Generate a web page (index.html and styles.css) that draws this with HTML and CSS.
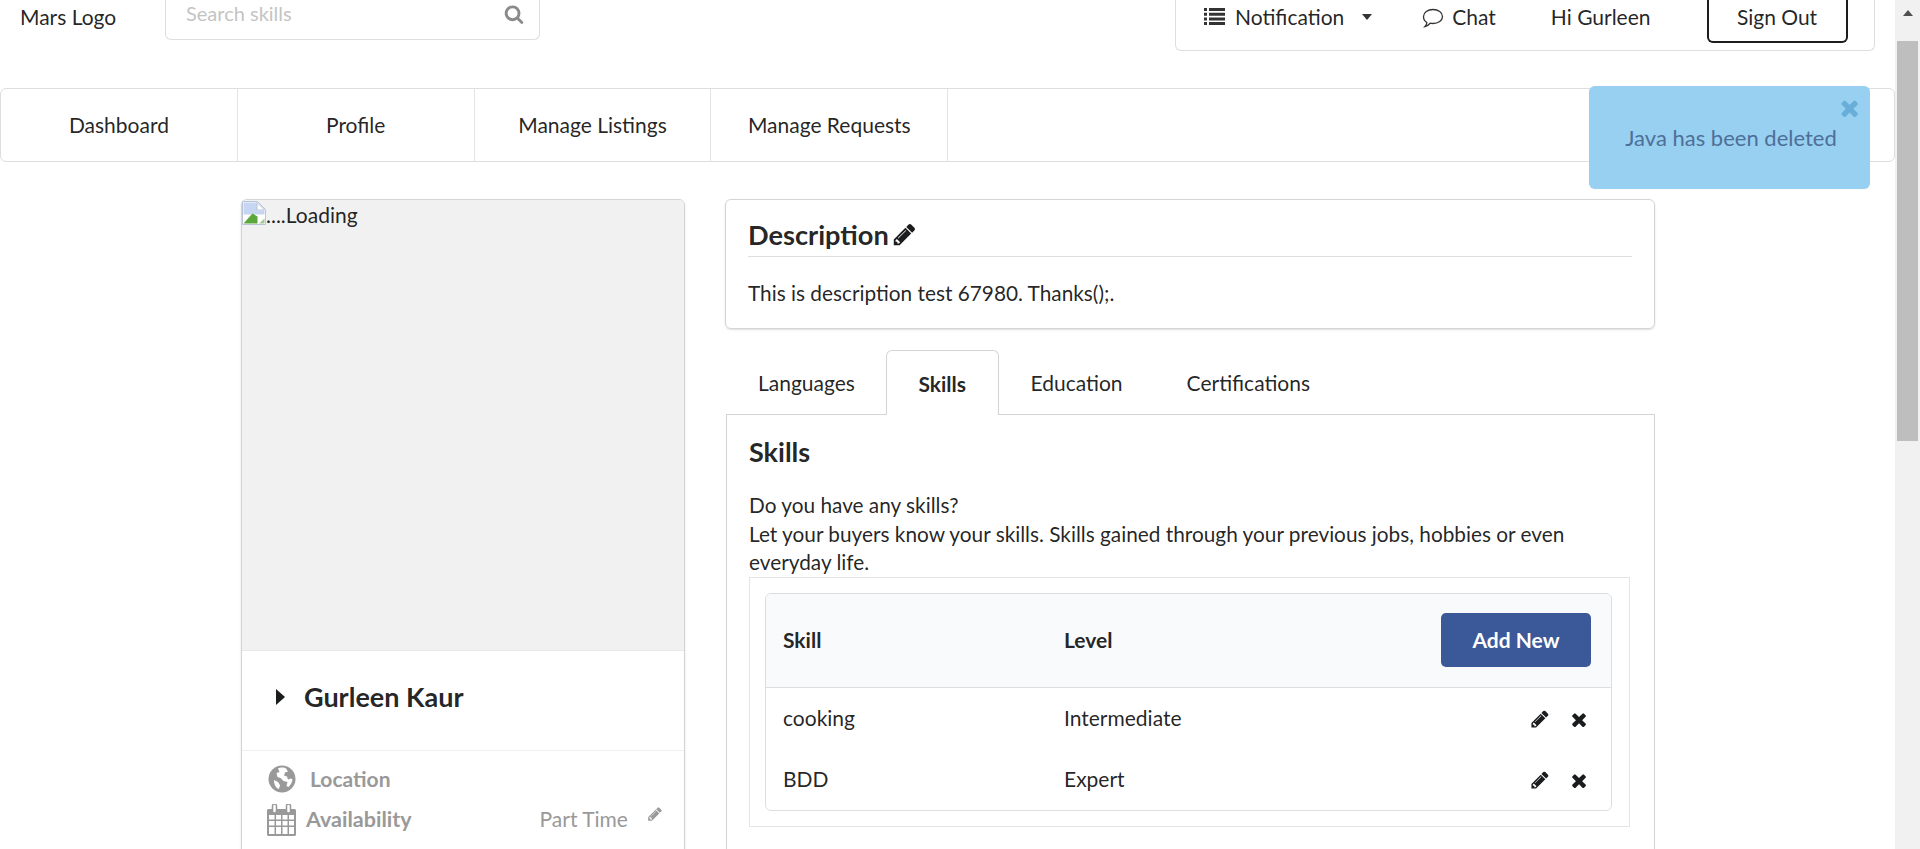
FILE: index.html
```html
<!DOCTYPE html>
<html lang="en">
<head>
    <meta charset="UTF-8">
    <title>Profile</title>
    <link rel="stylesheet" href="styles.css">
</head>
<body>
    <svg class="icon-defs" width="0" height="0">
        <symbol id="i-pencil" viewBox="0 0 1792 1792"><path d="M491 1536l91-91-235-235-91 91v107h128v128h107zm523-928q0-22-22-22-10 0-17 7l-542 542q-7 7-7 17 0 22 22 22 10 0 17-7l542-542q7-7 7-17zm-54-192l416 416-832 832h-416v-416zm683 96q0 53-37 90l-166 166-416-416 166-165q36-38 90-38 53 0 91 38l235 234q37 39 37 91z"/></symbol>
        <symbol id="i-close" viewBox="200 250 1300 1300"><path d="M1490 1322q0 40-28 68l-136 136q-28 28-68 28t-68-28l-294-294-294 294q-28 28-68 28t-68-28l-136-136q-28-28-28-68t28-68l294-294-294-294q-28-28-28-68t28-68l136-136q28-28 68-28t68 28l294 294 294-294q28-28 68-28t68 28l136 136q28 28 28 68t-28 68l-294 294 294 294q28 28 28 68z"/></symbol>
    </svg>

    <div class="page">
        <div class="content">
            <header class="top-bar">
                <a class="logo">Mars Logo</a>
                <div class="search">
                    <span class="search-text">Search skills</span>
                    <svg class="search-icon" viewBox="0 0 1792 1792"><path d="M1216 832q0-185-131.500-316.500t-316.500-131.500-316.500 131.500-131.500 316.500 131.500 316.500 316.500 131.500 316.500-131.500 131.500-316.500zm512 832q0 52-38 90t-90 38q-54 0-90-38l-343-342q-179 124-399 124-143 0-273.500-55.500t-225-150-150-225-55.500-273.500 55.500-273.500 150-225 225-150 273.500-55.500 273.500 55.500 225 150 150 225 55.500 273.500q0 220-124 399l343 343q37 37 37 90z"/></svg>
                </div>
                <div class="user-menu">
                    <svg class="list-icon" viewBox="0 0 21 17"><path d="M0 0h3v3H0zM5 0h16v3H5zM0 4.700h3v3H0zM5 4.700h16v3H5zM0 9.400h3v3H0zM5 9.400h16v3H5zM0 14h3v3H0zM5 14h16v3H5z"/></svg>
                    <span class="menu-notif">Notification</span>
                    <i class="caret-down"></i>
                    <svg class="chat-icon" viewBox="0 0 22 20"><path d="M11 1.500c5.300 0 9.500 3 9.500 7s-4.200 7-9.500 7c-1 0-1.900-.1-2.800-.3C6.800 16.800 5 18 3 18.500c.9-1 1.700-2.300 1.900-4C2.800 13.200 1.500 11 1.500 8.500c0-4 4.200-7 9.500-7z"/></svg>
                    <span class="menu-chat">Chat</span>
                    <span class="menu-hi">Hi Gurleen</span>
                    <button class="sign-out">Sign Out</button>
                </div>
            </header>

            <nav class="main-nav">
                <a class="nav-item">Dashboard</a>
                <a class="nav-item">Profile</a>
                <a class="nav-item">Manage Listings</a>
                <a class="nav-item">Manage Requests</a>
            </nav>

            <main class="profile">
                <aside class="side-card">
                    <div class="photo">
                        <svg class="broken-img" viewBox="0 0 24 24">
                            <path d="M.5.500h15l8 8v15H.5z" fill="#fff" stroke="#b9c4d6"/>
                            <path d="M1.500 1.500h13.500v8h7.500v4H1.500z" fill="#c6d6f2"/>
                            <path d="M15 1.500l7.500 7.500H15z" fill="#fff" stroke="#b9c4d6"/>
                            <path d="M1.500 22.500l9-10 5 3v7z" fill="#5aa83c"/>
                            <path d="M17 22.500l5.500-5v5z" fill="#a5c49a"/>
                        </svg><span>....Loading</span>
                    </div>
                    <div class="name-row">
                        <i class="caret-right"></i>
                        <span class="full-name">Gurleen Kaur</span>
                    </div>
                    <div class="info">
                        <div class="info-row">
                            <svg class="globe-icon" viewBox="0 0 28 28">
                                <circle cx="14" cy="14" r="13.500"/>
                                <path fill="#fff" d="M10 3.500c2-1 6-1.500 8 0l2 3-3 1-1 3 3 1 1 3 3-1 1.500 1c-.5 3-2 6-4 7.500l-2-1 1-4-4-1-3-3-3-1-1-4 3-1zM6 15l4 2 2 3-1 4c-3-1-5-4-5-9z"/>
                            </svg>
                            <span class="info-label loc-label">Location</span>
                        </div>
                        <div class="info-row avail-row">
                            <svg class="cal-icon" viewBox="0 0 29 32">
                                <path d="M1.500 5h26a1.500 1.500 0 0 1 1.500 1.500v24a1.500 1.500 0 0 1-1.500 1.500h-26A1.500 1.500 0 0 1 0 30.500v-24A1.500 1.500 0 0 1 1.500 5z"/>
                                <path fill="#fff" d="M2 11h5.500v4.500H2zM9 11h5v4.500H9zM15.500 11h5v4.500h-5zM22 11h5v4.500h-5zM2 17h5.500v4.500H2zM9 17h5v4.500H9zM15.500 17h5v4.500h-5zM22 17h5v4.500h-5zM2 23h5.500v7H2zM9 23h5v7H9zM15.500 23h5v7h-5zM22 23h5v7h-5z"/>
                                <rect x="5.500" y="0" width="4" height="9" rx="2" fill="#fff" stroke="#999" stroke-width="1.500"/>
                                <rect x="19.500" y="0" width="4" height="9" rx="2" fill="#fff" stroke="#999" stroke-width="1.500"/>
                            </svg>
                            <span class="info-label avail-label">Availability</span>
                            <span class="info-value">Part Time</span>
                            <svg class="info-edit"><use href="#i-pencil"/></svg>
                        </div>
                    </div>
                </aside>

                <section class="details">
                    <div class="desc-card">
                        <h3 class="desc-title">Description <svg class="desc-edit"><use href="#i-pencil"/></svg></h3>
                        <p class="desc-text">This is description test 67980. Thanks();.</p>
                    </div>

                    <div class="tabs">
                        <a class="tab">Languages</a>
                        <a class="tab active">Skills</a>
                        <a class="tab">Education</a>
                        <a class="tab">Certifications</a>
                    </div>
                    <div class="tab-body">
                        <h3 class="tab-title">Skills</h3>
                        <p class="tab-intro">Do you have any skills?<br>Let your buyers know your skills. Skills gained through your previous jobs, hobbies or even everyday life.</p>
                        <div class="table-wrap">
                            <table class="skills-table">
                                <thead>
                                    <tr>
                                        <th class="col-skill">Skill</th>
                                        <th class="col-level">Level</th>
                                        <th class="col-actions"><button class="add-new">Add New</button></th>
                                    </tr>
                                </thead>
                                <tbody>
                                    <tr>
                                        <td>cooking</td>
                                        <td>Intermediate</td>
                                        <td class="row-actions"><svg class="edit-icon"><use href="#i-pencil"/></svg><svg class="del-icon"><use href="#i-close"/></svg></td>
                                    </tr>
                                    <tr>
                                        <td>BDD</td>
                                        <td>Expert</td>
                                        <td class="row-actions"><svg class="edit-icon"><use href="#i-pencil"/></svg><svg class="del-icon"><use href="#i-close"/></svg></td>
                                    </tr>
                                </tbody>
                            </table>
                        </div>
                    </div>
                </section>
            </main>
        </div>

        <div class="scrollbar">
            <i class="scroll-arrow"></i>
            <div class="scroll-thumb"></div>
        </div>
    </div>

    <div class="toast">
        <svg class="toast-close"><use href="#i-close"/></svg>
        <span class="toast-text">Java has been deleted</span>
    </div>
</body>
</html>
```

FILE: styles.css
```css
html, body {
    margin: 0;
    height: 100%;
    overflow: hidden;
}

body {
    font-family: Lato, "Open Sans", Arial, sans-serif;
    font-size: 21px;
    line-height: 28.6px;
    color: rgba(0,0,0,.87);
    background: #fff;
}

.icon-defs {
    position: absolute;
}

.page {
    display: flex;
    height: 849px;
    overflow: hidden;
}

.content {
    flex: 1;
    min-width: 0;
}

/* top bar, scrolled partly out of view */
.top-bar {
    display: flex;
    align-items: flex-start;
    height: 50px;
}

.logo {
    margin: 3px 0 0 20px;
    width: 145px;
}

.search {
    display: flex;
    justify-content: space-between;
    width: 375px;
    height: 40px;
    box-sizing: border-box;
    padding: 0 15px 0 20px;
    border: 1px solid #dedede;
    border-top: none;
    border-radius: 0 0 6px 6px;
}

.search-text {
    margin-top: -1px;
    font-size: 20px;
    color: #c4c4c4;
}

.search-icon {
    width: 20px;
    height: 20px;
    margin-top: 4px;
    fill: #8a8a8a;
}

.user-menu {
    display: flex;
    align-items: flex-start;
    width: 700px;
    height: 51px;
    box-sizing: border-box;
    margin-left: 635px;
    padding-left: 28px;
    border: 1px solid #dedede;
    border-top: none;
    border-radius: 0 0 6px 6px;
}

.user-menu span {
    margin-top: 3px;
}

.list-icon {
    width: 21px;
    height: 17px;
    margin-top: 8px;
    fill: #333;
}

.menu-notif {
    margin-left: 10px;
}

.caret-down {
    width: 0;
    height: 0;
    margin: 14px 0 0 18px;
    border: 5.500px solid transparent;
    border-top: 6px solid #333;
    border-bottom: none;
}

.chat-icon {
    width: 22px;
    height: 20px;
    margin: 8px 0 0 50px;
    fill: none;
    stroke: #333;
    stroke-width: 1.300;
}

.menu-chat {
    margin-left: 8px;
}

.menu-hi {
    margin-left: 55px;
}

.sign-out {
    width: 141px;
    height: 43px;
    margin-left: 56px;
    padding: 0 0 6px;
    font: inherit;
    color: rgba(0,0,0,.87);
    background: #fff;
    border: 2px solid #1b1c1d;
    border-top: none;
    border-radius: 0 0 6px 6px;
}

/* main navigation */
.main-nav {
    display: flex;
    height: 74px;
    box-sizing: border-box;
    margin-top: 38px;
    border: 1px solid #dedede;
    border-radius: 6px;
}

.nav-item {
    display: flex;
    align-items: center;
    justify-content: center;
    width: 236.800px;
    box-sizing: border-box;
    padding-top: 1px;
    border-right: 1px solid #e4e4e4;
}

.profile {
    display: flex;
    gap: 40px;
    align-items: flex-start;
    margin: 37px 0 0 241px;
}

/* left card */
.side-card {
    width: 444px;
    height: 700px;
    box-sizing: border-box;
    flex: none;
    border: 1px solid #d4d4d5;
    border-radius: 6px;
    box-shadow: 0 1px 2px rgba(34,36,38,.15);
}

.photo {
    display: flex;
    height: 450px;
    background: #f1f1f1;
    border-bottom: 1px solid #e8e8e8;
    border-radius: 6px 6px 0 0;
}

.broken-img {
    width: 24px;
    height: 24px;
    margin-top: 1px;
    flex: none;
}

.photo span {
    margin-top: 1px;
}

.name-row {
    display: flex;
    align-items: center;
    height: 93px;
    padding: 0 0 6px 33px;
    border-bottom: 1px solid #f0f0f0;
}

.caret-right {
    width: 0;
    height: 0;
    border: 8px solid transparent;
    border-left: 9px solid #1b1c1d;
    border-right: none;
    margin: -2px 19px 0 1px;
}

.full-name {
    font-size: 27px;
    font-weight: 700;
}

.info {
    padding: 14px 0 0 25px;
    color: #999;
}

.info-row {
    display: flex;
    align-items: center;
}

.avail-row {
    margin-top: 5px;
}

.globe-icon {
    width: 28px;
    height: 28px;
    margin-left: 1px;
    fill: #999;
}

.cal-icon {
    width: 29px;
    height: 32px;
    fill: #999;
    margin-top: 5px;
}

.info-label {
    margin-left: 14px;
    font-weight: 700;
}

.avail-label {
    margin: 5px 0 0 10px;
    font-size: 21.500px;
}

.info-value {
    margin: 5px 0 0 128px;
}

.info-edit {
    width: 16px;
    height: 16px;
    margin: -6px 0 0 19px;
    fill: #999;
}

/* right column */
.details {
    width: 930px;
    flex: none;
}

.desc-card {
    height: 130px;
    box-sizing: border-box;
    padding: 18px 22px 0;
    border: 1px solid #d4d4d5;
    border-radius: 6px;
    box-shadow: 0 1px 2px rgba(34,36,38,.15);
}

.desc-title {
    margin: 0;
    padding-bottom: 5px;
    font-size: 27.200px;
    line-height: 33px;
    font-weight: 700;
    border-bottom: 1px solid #dedede;
}

.desc-edit {
    width: 25px;
    height: 25px;
    margin-left: -3px;
    vertical-align: -2px;
    fill: #1b1c1d;
}

.desc-text {
    margin: 22px 0 0;
    font-size: 20.800px;
}

.tabs {
    display: flex;
    margin: 21px 0 0 1px;
    height: 65px;
    position: relative;
    z-index: 1;
}

.tab {
    display: flex;
    align-items: center;
    padding: 2px 32px 0;
    margin-bottom: 1px;
    color: rgba(0,0,0,.87);
}

.tab:first-child {
    padding-right: 31px;
}

.tab.active {
    padding: 2px 31.500px 0;
    margin-bottom: 0;
    font-weight: 700;
    background: #fff;
    border: 1px solid #d4d4d5;
    border-bottom: none;
    border-radius: 6px 6px 0 0;
}

.tab-body {
    height: 500px;
    margin: -1px 0 0 1px;
    padding: 0 0 0 22px;
    border: 1px solid #d4d4d5;
}

.tab-title {
    margin: 20px 0 0;
    font-size: 27px;
    line-height: 33px;
    font-weight: 700;
}

.tab-intro {
    margin: 23px 19px 0 0;
    font-size: 20.800px;
}

.table-wrap {
    width: 881px;
    height: 250px;
    box-sizing: border-box;
    padding: 15px 17px 15px 15px;
    border: 1px solid #e4e4e4;
}

.skills-table {
    width: 100%;
    height: 218px;
    border: 1px solid #dedede;
    border-radius: 6px;
    border-spacing: 0;
}

.skills-table th {
    height: 93px;
    padding: 0;
    text-align: left;
    background: #f9fafb;
    border-bottom: 1px solid #dedede;
    font-weight: 700;
}

.skills-table th:first-child {
    border-top-left-radius: 6px;
}

.skills-table th:last-child {
    border-top-right-radius: 6px;
}

.skills-table td {
    height: 61px;
    padding: 0;
}

.col-skill {
    width: 281px;
}

.skills-table th.col-skill,
.skills-table td:first-child {
    padding-left: 17px;
}

.col-actions {
    width: 260px;
}

.add-new {
    display: block;
    width: 150px;
    height: 54px;
    margin-left: 90px;
    padding: 0;
    font: inherit;
    font-weight: 700;
    color: #fff;
    background: #3b5998;
    border: none;
    border-radius: 5px;
}

.row-actions {
    white-space: nowrap;
}

.edit-icon {
    width: 20px;
    height: 20px;
    margin: -3px 0 0 179px;
    vertical-align: middle;
    fill: #1b1c1d;
}

.del-icon {
    width: 15px;
    height: 15px;
    margin: -3px 0 0 21px;
    vertical-align: middle;
    fill: #1b1c1d;
}

/* fake browser scrollbar */
.scrollbar {
    position: relative;
    width: 25px;
    flex: none;
    background: #f1f1f1;
}

.scroll-arrow {
    display: block;
    width: 0;
    height: 0;
    margin: 10px auto 0;
    border: 5px solid transparent;
    border-bottom: 6px solid #505050;
    border-top: none;
}

.scroll-thumb {
    position: absolute;
    top: 41px;
    left: 2px;
    right: 2px;
    height: 400px;
    background: #bebebe;
}

/* notification toast */
.toast {
    position: absolute;
    top: 86px;
    left: 1589px;
    display: flex;
    align-items: center;
    justify-content: center;
    width: 281px;
    height: 103px;
    padding: 2px 0 0 3px;
    box-sizing: border-box;
    color: #4e6f98;
    background: #97d0f0;
    border-radius: 6px;
    box-shadow: 0 0 1px rgba(0,0,0,.1);
}

.toast-close {
    position: absolute;
    top: 12px;
    right: 12px;
    width: 18px;
    height: 20px;
    fill: #68aed8;
}

.toast-text {
    font-size: 22px;
}
```
